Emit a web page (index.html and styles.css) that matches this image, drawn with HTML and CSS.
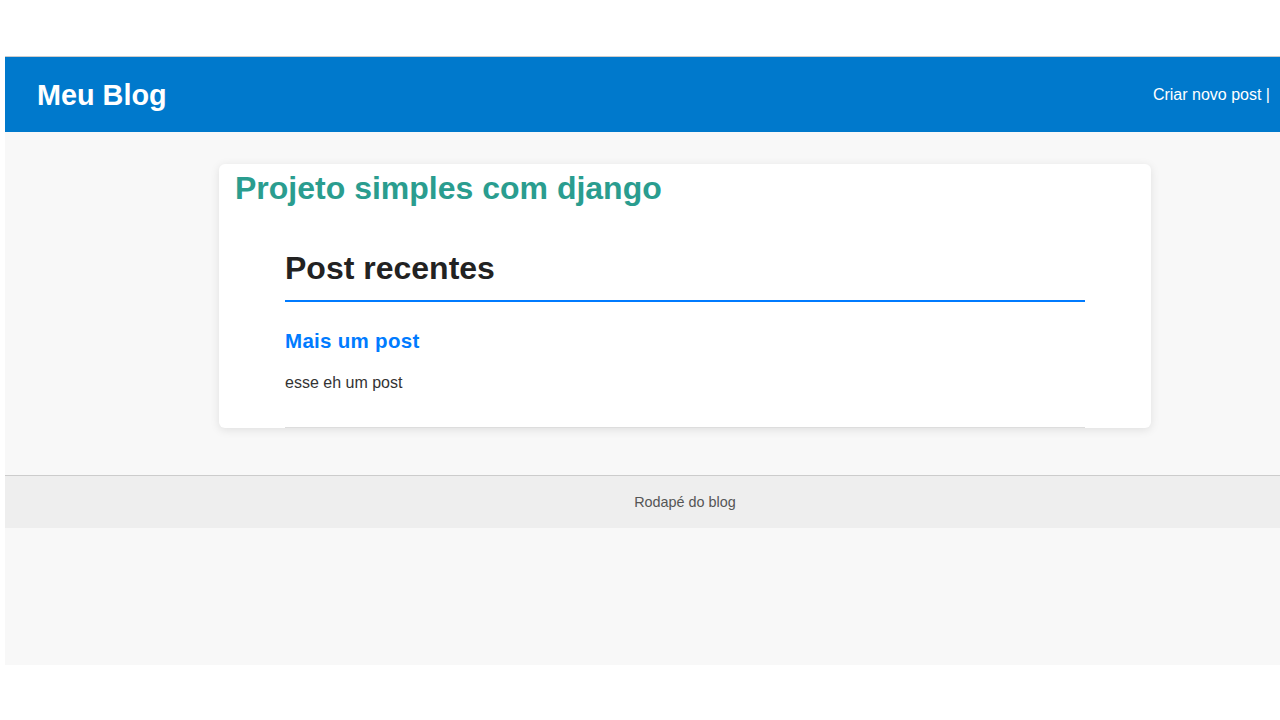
FILE: index.html
```html
<!DOCTYPE html>
<html lang="pt-br">
<head>
<meta charset="utf-8">
<title>Meu Blog</title>
<link rel="stylesheet" href="styles.css">
</head>
<body>
<div class="page">
  <header class="site-header">
    <a class="brand" href="#">Meu Blog</a>
    <nav class="nav"><a href="#">Criar novo post</a> |</nav>
  </header>
  <main class="content">
    <div class="card">
      <h1 class="title">Projeto simples com django</h1>
      <section class="posts">
        <h2 class="posts-heading">Post recentes</h2>
        <article class="post">
          <h3 class="post-title"><a href="#">Mais um post</a></h3>
          <p class="post-body">esse eh um post</p>
        </article>
      </section>
    </div>
  </main>
  <footer class="site-footer">Rodapé do blog</footer>
</div>
</body>
</html>
```
FILE: styles.css
```css
html, body {
  margin: 0;
  padding: 0;
  background: #ffffff;
}
body {
  font-family: "Liberation Sans", Arial, sans-serif;
  font-size: 16px;
  color: #333;
}
.page {
  box-sizing: border-box;
  margin: 56px 0 0 5px;
  height: 609px;
  background: #f8f8f8;
  border-top: 1px solid #cccccc;
  overflow: hidden;
}
.site-header {
  height: 75px;
  background: #0079cc;
  display: flex;
  align-items: center;
  justify-content: space-between;
  padding: 0 10px 0 32px;
}
.brand {
  color: #ffffff;
  font-weight: bold;
  font-size: 28.8px;
  text-decoration: none;
  padding-top: 2px;
}
.nav {
  color: #ffffff;
  font-size: 16px;
}
.nav a {
  color: #ffffff;
  text-decoration: none;
}
.content {
  padding: 32px 0 47px 85px;
}
.card {
  width: 932px;
  box-sizing: border-box;
  margin: 0 auto;
  background: #ffffff;
  border-radius: 6px;
  box-shadow: 0 2px 10px rgba(0, 0, 0, 0.1);
  padding: 6px 16px 0;
}
.title {
  margin: 0;
  font-size: 32px;
  font-weight: bold;
  color: #2a9d8f;
}
.posts {
  max-width: 800px;
  margin: 0 auto;
}
.posts-heading {
  margin: 43px 0 0;
  padding-bottom: 13px;
  border-bottom: 2px solid #007bff;
  font-size: 32px;
  color: #222;
}
.post {
  padding: 27px 0 35px;
  border-bottom: 1px solid #dddddd;
}
.post-title {
  margin: 0;
  font-size: 20.5px;
  letter-spacing: 0.3px;
}
.post-title a {
  color: #007bff;
  text-decoration: none;
}
.post-body {
  margin: 21px 0 0;
  color: #333;
}
.site-footer {
  border-top: 1px solid #cccccc;
  background: #eeeeee;
  padding: 18px 0 18px 85px;
  text-align: center;
  font-size: 14.4px;
  line-height: 16px;
  color: #555;
}
```
